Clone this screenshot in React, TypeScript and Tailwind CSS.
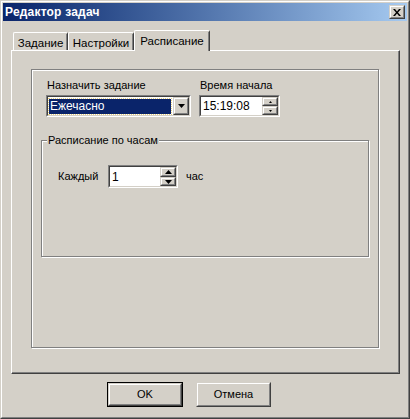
import React from 'react';

const font = { fontFamily: '"Liberation Sans", Arial, sans-serif' };

function Raised({ className = '', children }: { className?: string; children?: React.ReactNode }) {
  return (
    <div className={`border border-t-[#d4d0c8] border-l-[#d4d0c8] border-r-[#404040] border-b-[#404040] bg-[#d4d0c8] ${className}`}>
      <div className="w-full h-full border border-t-white border-l-white border-r-[#808080] border-b-[#808080] flex items-center justify-center">
        {children}
      </div>
    </div>
  );
}

function Sunken({ className = '', children }: { className?: string; children?: React.ReactNode }) {
  return (
    <div className={`border border-t-[#808080] border-l-[#808080] border-r-white border-b-white ${className}`}>
      <div className="w-full h-full border border-t-[#404040] border-l-[#404040] border-r-[#d4d0c8] border-b-[#d4d0c8] bg-white flex">
        {children}
      </div>
    </div>
  );
}

function DownTri({ w = 7 }: { w?: number }) {
  const h = Math.ceil(w / 2);
  return (
    <svg width={w} height={h} viewBox={`0 0 ${w} ${h}`}>
      <polygon points={`0,0 ${w},0 ${w / 2},${h}`} fill="#000" />
    </svg>
  );
}

function UpTri({ w = 7 }: { w?: number }) {
  const h = Math.ceil(w / 2);
  return (
    <svg width={w} height={h} viewBox={`0 0 ${w} ${h}`}>
      <polygon points={`0,${h} ${w},${h} ${w / 2},0`} fill="#000" />
    </svg>
  );
}

function Tab({ label, active, width }: { label: string; active?: boolean; width: number }) {
  return (
    <div
      className={`relative flex items-start justify-center border-t border-l border-t-white border-l-white border-r border-r-[#404040] rounded-t-[2px] bg-[#d4d0c8] text-[11.5px] text-black ${
        active ? 'h-[21px] -mb-px z-10 pt-[2px]' : 'h-[18px] pt-[2px]'
      }`}
      style={{ width }}
    >
      <div className="absolute right-0 top-[1px] bottom-0 w-px bg-[#808080]" />
      {label}
    </div>
  );
}

export default function App() {
  return (
    <div className="w-[410px] h-[419px] bg-[#d4d0c8] overflow-hidden" style={font}>
      <div className="w-full h-full border border-t-[#d4d0c8] border-l-[#d4d0c8] border-r-[#404040] border-b-[#404040]">
        <div className="w-full h-full border border-t-white border-l-white border-r-[#808080] border-b-[#808080] p-px flex flex-col">
          {/* Title bar */}
          <div className="h-[18px] flex items-center justify-between bg-gradient-to-r from-[#0a246a] to-[#a6caf0] pl-[2px] pr-[2px]">
            <span className="text-white font-bold text-[12px] leading-none tracking-[0.2px]">Редактор задач</span>
            <Raised className="w-[16px] h-[14px]">
              <svg width="8" height="7" viewBox="0 0 8 7">
                <path d="M0 0h2l2 2.5L6 0h2L5 3.5 8 7H6L4 4.5 2 7H0l3-3.5z" fill="#000" />
              </svg>
            </Raised>
          </div>

          {/* Tabs */}
          <div className="ml-[8px] mt-[9px] w-[389px]">
            <div className="flex items-end pl-[2px] h-[20px]">
              <Tab label="Задание" width={55} />
              <Tab label="Настройки" width={66} />
              <Tab label="Расписание" width={76} active />
            </div>
            <div className="h-[324px] border border-t-white border-l-white border-r-[#404040] border-b-[#404040]">
              <div className="w-full h-full border-r border-b border-r-[#808080] border-b-[#808080] pl-[19px] pt-[18px]">
                {/* Outer frame */}
                <div className="w-[348px] h-[279px] border border-[#808080] shadow-[1px_1px_0_#fff,inset_1px_1px_0_#fff] text-[11px] text-black">
                  <div className="pl-[14px] pt-[9px] flex gap-[8px]">
                    <div className="flex flex-col">
                      <span className="pl-px leading-[13px]">Назначить задание</span>
                      <Sunken className="mt-[3px] w-[145px] h-[22px]">
                        <div className="flex-1 flex items-center pl-px">
                          <div className="w-[122px] h-[15px] bg-[#0a246a] outline outline-1 outline-dotted outline-[#e8d080] text-white text-[12px] flex items-center pl-[1px] leading-none">
                            Ежечасно
                          </div>
                        </div>
                        <Raised className="w-[16px] h-full">
                          <DownTri w={7} />
                        </Raised>
                      </Sunken>
                    </div>
                    <div className="flex flex-col">
                      <span className="pl-px leading-[13px]">Время начала</span>
                      <Sunken className="mt-[3px] w-[81px] h-[22px]">
                        <div className="flex-1 flex items-center pl-[2px] text-[12px]">15:19:08</div>
                        <div className="w-[16px] flex flex-col">
                          <Raised className="h-[9px]">
                            <UpTri w={3} />
                          </Raised>
                          <Raised className="h-[9px]">
                            <DownTri w={3} />
                          </Raised>
                        </div>
                      </Sunken>
                    </div>
                  </div>

                  {/* Inner group box */}
                  <div className="ml-[9px] mt-[23px] relative w-[328px] h-[117px] border border-[#808080] shadow-[1px_1px_0_#fff,inset_1px_1px_0_#fff]">
                    <span className="absolute left-[5px] top-[-7px] bg-[#d4d0c8] px-[1px] leading-[13px]">
                      Расписание по часам
                    </span>
                    <div className="pl-[16px] pt-[24px] flex items-center">
                      <span className="w-[50px] leading-[13px]">Каждый</span>
                      <Sunken className="w-[70px] h-[23px]">
                        <div className="flex-1 flex items-center pl-[2px] text-[12px]">1</div>
                        <div className="w-[16px] flex flex-col">
                          <Raised className="h-[10px]">
                            <UpTri w={7} />
                          </Raised>
                          <Raised className="h-[9px]">
                            <DownTri w={7} />
                          </Raised>
                        </div>
                      </Sunken>
                      <span className="ml-[8px] leading-[13px]">час</span>
                    </div>
                  </div>
                </div>
              </div>
            </div>
          </div>

          {/* Buttons */}
          <div className="mt-[8px] flex pl-[104px] gap-[13px] text-[11px] text-black">
            <div className="w-[76px] h-[25px] border border-black">
              <Raised className="w-full h-full">OK</Raised>
            </div>
            <Raised className="w-[75px] h-[25px]">Отмена</Raised>
          </div>
        </div>
      </div>
    </div>
  );
}
